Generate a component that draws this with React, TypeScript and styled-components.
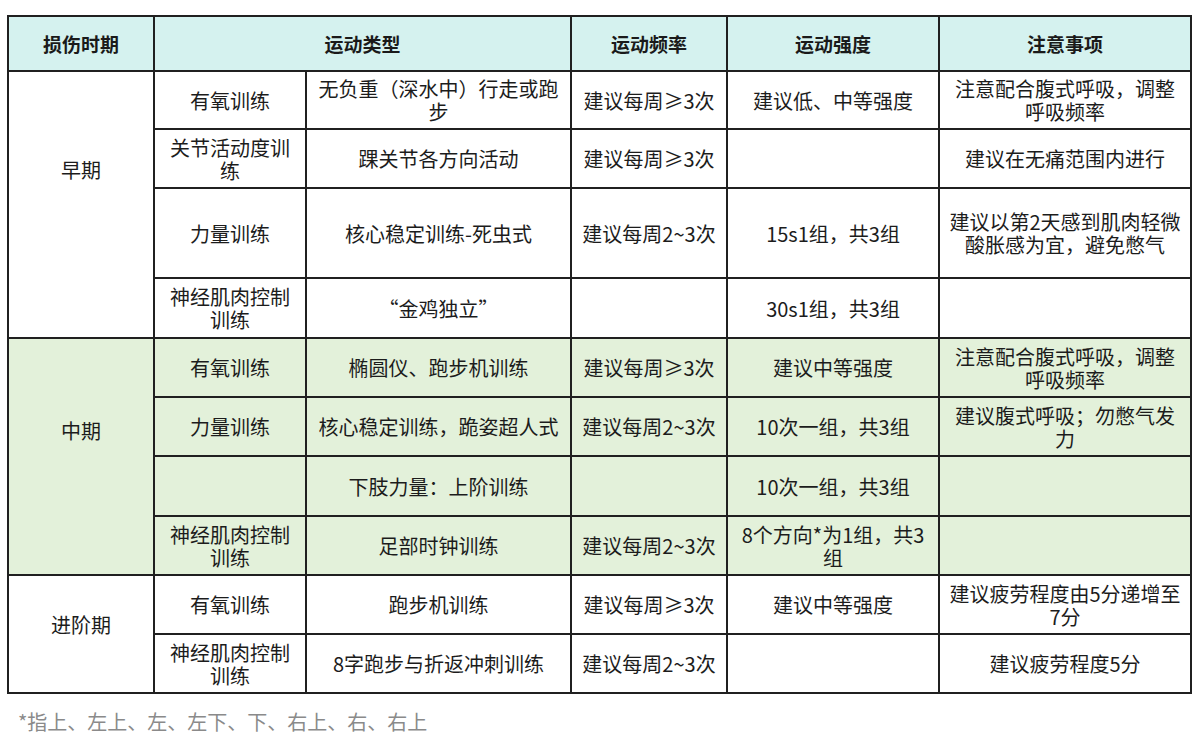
import styled, { createGlobalStyle } from "styled-components";

const GlobalStyle = createGlobalStyle`
    html, body {
        margin: 0;
        padding: 0;
        background: #ffffff;
    }
    body {
        font-family: "Noto Sans CJK SC", "Noto Sans", "Liberation Sans", sans-serif;
        color: #1c1c1c;
    }
`;

const Page = styled.main`
    width: 1200px;
    height: 738px;
    padding: 15px 0 0 7px;
    box-sizing: border-box;
    overflow: hidden;
`;

const Table = styled.table`
    width: 1183px;
    table-layout: fixed;
    border-collapse: collapse;
    border: 2px solid #202020;
`;

const Row = styled.tr<{ $h: number; $bg?: string }>`
    height: ${(p) => p.$h}px;
    background: ${(p) => p.$bg ?? "transparent"};
`;

const HeadCell = styled.th`
    background: #d5f2ef;
    border: 2px solid #202020;
    font-size: 19px;
    font-weight: 700;
    text-align: center;
    vertical-align: middle;
    padding: 0 9px;
    color: #1a1a1a;
`;

const Cell = styled.td<{ $lift?: number }>`
    border: 2px solid #202020;
    font-size: 20px;
    line-height: 23px;
    text-align: center;
    vertical-align: middle;
    padding: 0 9px ${(p) => p.$lift ?? 0}px;
    word-break: break-all;
`;

const Note = styled.p`
    margin: 16px 0 0 11px;
    font-size: 20px;
    line-height: 24px;
    color: #8a8a8a;
`;

type Line = {
    h: number;
    type: string;
    item: string;
    freq: string;
    power: string;
    note: string;
};

type Stage = {
    name: string;
    lift: number;
    bg?: string;
    rows: Line[];
};

const stages: Stage[] = [
    {
        name: "早期",
        lift: 71,
        rows: [
            { h: 58, type: "有氧训练", item: "无负重（深水中）行走或跑步", freq: "建议每周≥3次", power: "建议低、中等强度", note: "注意配合腹式呼吸，调整呼吸频率" },
            { h: 59, type: "关节活动度训练", item: "踝关节各方向活动", freq: "建议每周≥3次", power: "", note: "建议在无痛范围内进行" },
            { h: 90, type: "力量训练", item: "核心稳定训练-死虫式", freq: "建议每周2~3次", power: "15s1组，共3组", note: "建议以第2天感到肌肉轻微酸胀感为宜，避免憋气" },
            { h: 60, type: "神经肌肉控制训练", item: "“金鸡独立”", freq: "", power: "30s1组，共3组", note: "" },
        ],
    },
    {
        name: "中期",
        lift: 53,
        bg: "#e3f1da",
        rows: [
            { h: 59, type: "有氧训练", item: "椭圆仪、跑步机训练", freq: "建议每周≥3次", power: "建议中等强度", note: "注意配合腹式呼吸，调整呼吸频率" },
            { h: 59, type: "力量训练", item: "核心稳定训练，跪姿超人式", freq: "建议每周2~3次", power: "10次一组，共3组", note: "建议腹式呼吸；勿憋气发力" },
            { h: 60, type: "", item: "下肢力量：上阶训练", freq: "", power: "10次一组，共3组", note: "" },
            { h: 59, type: "神经肌肉控制训练", item: "足部时钟训练", freq: "建议每周2~3次", power: "8个方向*为1组，共3组", note: "" },
        ],
    },
    {
        name: "进阶期",
        lift: 20,
        rows: [
            { h: 59, type: "有氧训练", item: "跑步机训练", freq: "建议每周≥3次", power: "建议中等强度", note: "建议疲劳程度由5分递增至7分" },
            { h: 59, type: "神经肌肉控制训练", item: "8字跑步与折返冲刺训练", freq: "建议每周2~3次", power: "", note: "建议疲劳程度5分" },
        ],
    },
];

export default function App() {
    return (
        <>
            <GlobalStyle />
            <Page>
                <Table>
                    <colgroup>
                        <col style={{ width: 146 }} />
                        <col style={{ width: 152 }} />
                        <col style={{ width: 265 }} />
                        <col style={{ width: 156 }} />
                        <col style={{ width: 212 }} />
                        <col style={{ width: 252 }} />
                    </colgroup>
                    <thead>
                        <Row $h={55}>
                            <HeadCell>损伤时期</HeadCell>
                            <HeadCell colSpan={2}>运动类型</HeadCell>
                            <HeadCell>运动频率</HeadCell>
                            <HeadCell>运动强度</HeadCell>
                            <HeadCell>注意事项</HeadCell>
                        </Row>
                    </thead>
                    <tbody>
                        {stages.map((stage) =>
                            stage.rows.map((r, i) => (
                                <Row key={stage.name + i} $h={r.h} $bg={stage.bg}>
                                    {i === 0 && (
                                        <Cell rowSpan={stage.rows.length} $lift={stage.lift}>
                                            {stage.name}
                                        </Cell>
                                    )}
                                    <Cell>{r.type}</Cell>
                                    <Cell>{r.item}</Cell>
                                    <Cell>{r.freq}</Cell>
                                    <Cell>{r.power}</Cell>
                                    <Cell>{r.note}</Cell>
                                </Row>
                            ))
                        )}
                    </tbody>
                </Table>
                <Note>*指上、左上、左、左下、下、右上、右、右上</Note>
            </Page>
        </>
    );
}
